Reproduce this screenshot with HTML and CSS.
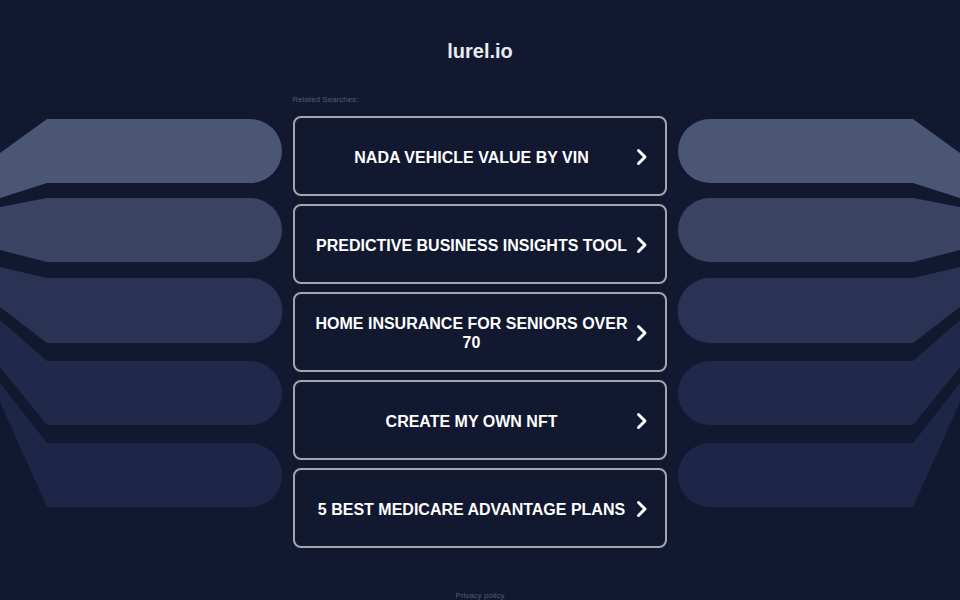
FILE: index.html
```html
<!DOCTYPE html>
<html lang="en">
<head>
<meta charset="utf-8">
<title>lurel.io</title>
<link rel="stylesheet" href="styles.css">
</head>
<body>
<svg class="backdrop" viewBox="0 0 960 600" width="960" height="600" aria-hidden="true">
  <g class="fan">
    <path class="band b1" d="M0,153 L47,119 H250 A32,32 0 0 1 250,183 H47 L0,198 Z"/>
    <path class="band b2" d="M0,207 L47,198 H250 A32,32 0 0 1 250,262 H47 L0,250 Z"/>
    <path class="band b3" d="M0,267 L47,278 H250 A32.5,32.5 0 0 1 250,343 H47 L0,307 Z"/>
    <path class="band b4" d="M0,320 L47,361 H250 A32,32 0 0 1 250,425 H47 L0,367 Z"/>
    <path class="band b5" d="M0,383 L47,443 H250 A32,32 0 0 1 250,507 H47 L0,402 Z"/>
  </g>
  <g class="fan" transform="translate(960 0) scale(-1 1)">
    <path class="band b1" d="M0,153 L47,119 H250 A32,32 0 0 1 250,183 H47 L0,198 Z"/>
    <path class="band b2" d="M0,207 L47,198 H250 A32,32 0 0 1 250,262 H47 L0,250 Z"/>
    <path class="band b3" d="M0,267 L47,278 H250 A32.5,32.5 0 0 1 250,343 H47 L0,307 Z"/>
    <path class="band b4" d="M0,320 L47,361 H250 A32,32 0 0 1 250,425 H47 L0,367 Z"/>
    <path class="band b5" d="M0,383 L47,443 H250 A32,32 0 0 1 250,507 H47 L0,402 Z"/>
  </g>
</svg>

<main class="page">
  <h1 class="domain">lurel.io</h1>
  <section class="searches">
    <p class="searches-label">Related Searches:</p>
    <ul class="link-list">
      <li><a class="link-btn" href="#"><span class="link-text">NADA VEHICLE VALUE BY VIN</span><svg class="chev" viewBox="0 0 12 18" width="12" height="18"><path d="M2.5 2.5 L9 9 L2.5 15.5"/></svg></a></li>
      <li><a class="link-btn" href="#"><span class="link-text">PREDICTIVE BUSINESS INSIGHTS TOOL</span><svg class="chev" viewBox="0 0 12 18" width="12" height="18"><path d="M2.5 2.5 L9 9 L2.5 15.5"/></svg></a></li>
      <li><a class="link-btn" href="#"><span class="link-text">HOME INSURANCE FOR SENIORS OVER 70</span><svg class="chev" viewBox="0 0 12 18" width="12" height="18"><path d="M2.5 2.5 L9 9 L2.5 15.5"/></svg></a></li>
      <li><a class="link-btn" href="#"><span class="link-text">CREATE MY OWN NFT</span><svg class="chev" viewBox="0 0 12 18" width="12" height="18"><path d="M2.5 2.5 L9 9 L2.5 15.5"/></svg></a></li>
      <li><a class="link-btn" href="#"><span class="link-text">5 BEST MEDICARE ADVANTAGE PLANS</span><svg class="chev" viewBox="0 0 12 18" width="12" height="18"><path d="M2.5 2.5 L9 9 L2.5 15.5"/></svg></a></li>
    </ul>
  </section>
  <footer class="foot"><a href="#" class="privacy">Privacy policy</a></footer>
</main>
</body>
</html>
```

FILE: styles.css
```css
html, body {
  margin: 0;
  padding: 0;
}

body {
  background: #111830;
  font-family: "Liberation Sans", Arial, sans-serif;
  color: #ffffff;
  width: 960px;
  height: 600px;
  overflow: hidden;
  position: relative;
}

/* decorative fans on both sides */
.backdrop {
  position: absolute;
  left: 0;
  top: 0;
  z-index: 0;
  display: block;
}

.band.b1 { fill: #4b5574; }
.band.b2 { fill: #3a4362; }
.band.b3 { fill: #2a3354; }
.band.b4 { fill: #202949; }
.band.b5 { fill: #1d2646; }

.page {
  position: relative;
  z-index: 1;
  display: flex;
  flex-direction: column;
  align-items: center;
  padding-top: 39px;
}

.domain {
  margin: 0;
  font-size: 20px;
  line-height: 24px;
  font-weight: bold;
  color: #e9eaee;
}

.searches {
  width: 374px;
  margin-top: 31px;
  margin-right: 1px;
}

.searches-label {
  margin: 0;
  font-size: 8px;
  line-height: 12px;
  color: #525a7a;
}

.link-list {
  list-style: none;
  margin: 10px 0 0;
  padding: 0;
  display: flex;
  flex-direction: column;
  gap: 8px;
}

.link-btn {
  box-sizing: border-box;
  height: 80px;
  display: flex;
  align-items: center;
  padding: 2px 17px 0 19px;
  border: 2.5px solid #a3a6ad;
  border-radius: 8px;
  background: #111830;
  text-decoration: none;
  color: #ffffff;
}

.link-text {
  flex: 1;
  text-align: center;
  font-size: 16px;
  line-height: 19px;
  font-weight: bold;
  padding-right: 4px;
}

.chev {
  flex: none;
  display: block;
  margin-left: 2px;
  margin-top: -1px;
}

.chev path {
  fill: none;
  stroke: #ffffff;
  stroke-width: 3;
  stroke-linecap: round;
  stroke-linejoin: round;
}

.foot {
  margin-top: 42px;
  font-size: 8px;
  line-height: 12px;
}

.privacy {
  color: #525a7a;
  text-decoration: none;
}
```
